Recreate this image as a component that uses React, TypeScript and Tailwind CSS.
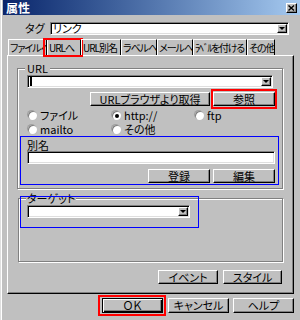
import type { ReactNode } from "react";

const raised =
  "bg-[#c0c0c0] border border-t-white border-l-white border-r-black border-b-black shadow-[inset_-1px_-1px_#808080]";
const sunken =
  "bg-white border border-t-[#808080] border-l-[#808080] border-r-white border-b-white shadow-[inset_1px_1px_#000,inset_-1px_-1px_#dfdfdf]";
const etched = "border border-[#808080] shadow-[inset_1px_1px_#fff,1px_1px_#fff]";
const mark = "pointer-events-none absolute border-2 border-[#ff0000]";

function Btn({ className, children }: { className: string; children: ReactNode }) {
  return (
    <div className={`flex items-center justify-center whitespace-nowrap ${raised} ${className}`}>
      {children}
    </div>
  );
}

function Combo({ className, children }: { className: string; children?: ReactNode }) {
  return (
    <div className={`flex h-[13px] items-stretch ${sunken} ${className}`}>
      <div className="flex flex-1 items-center pl-[2px] whitespace-nowrap">{children}</div>
      <div className={`my-[1px] mr-[1px] flex w-[10px] items-center justify-center ${raised}`}>
        <span className="h-0 w-0 border-x-[3px] border-t-[3px] border-x-transparent border-t-black" />
      </div>
    </div>
  );
}

function Radio({ checked, label, className }: { checked?: boolean; label: string; className: string }) {
  return (
    <div className={`flex items-center gap-[3px] ${className}`}>
      <span className="flex h-[9px] w-[9px] items-center justify-center rounded-full bg-white shadow-[inset_1px_1px_#808080,-1px_-1px_0_#a0a0a0]">
        {checked && <span className="h-[4px] w-[4px] rounded-full bg-black" />}
      </span>
      <span>{label}</span>
    </div>
  );
}

const tabs = [
  { label: "ファイルへ", w: "w-[39px]", t: "tracking-[-1px]" },
  { label: "URLへ", w: "w-[34px]", t: "tracking-[-1px]", marked: true },
  { label: "URL別名", w: "w-[40px]", t: "tracking-[-1px]" },
  { label: "ラベルへ", w: "w-[36px]", t: "tracking-[-1px]" },
  { label: "メールへ", w: "w-[36px]", t: "tracking-[-1px]" },
  { label: "ﾗﾍﾞﾙを付ける", w: "w-[54px]", t: "tracking-[-1.3px]" },
  { label: "その他", w: "w-[28px]", t: "tracking-[-1px]" },
];

export default function App() {
  return (
    <div className="h-[320px] w-[300px] overflow-hidden bg-[#c0c0c0] font-['Noto_Sans_CJK_JP',sans-serif] text-[11px] leading-none text-black shadow-[inset_1px_0_#dfdfdf,inset_2px_0_#fff] [font-feature-settings:'palt']">
      {/* title bar */}
      <div className="ml-[3px] flex h-[15px] items-center justify-between bg-linear-to-r from-[#0a246a] to-[#a6caf0] pl-[3px] pr-[3px]">
        <span className="text-[12px] font-bold text-white">属性</span>
        <div className={`flex h-[10px] w-[11px] items-center justify-center ${raised}`}>
          <svg width="7" height="6" viewBox="0 0 7 6">
            <path d="M0.5 0.5 L6 5.5 M6 0.5 L0.5 5.5" stroke="#000" strokeWidth="1.4" />
          </svg>
        </div>
      </div>

      {/* tag row */}
      <div className="mt-[7px] flex h-[13px] items-center">
        <span className="ml-[25px] w-[25px]">タグ</span>
        <Combo className="w-[239px]">リンク</Combo>
      </div>

      {/* tabs */}
      <div className="ml-[8px] mt-[4px] flex h-[16px]">
        {tabs.map((tab) => (
          <div
            key={tab.label}
            className={`relative h-full border-l border-r border-t border-l-white border-r-black border-t-white ${tab.w}`}
          >
            <div className={`h-full overflow-hidden whitespace-nowrap pl-[1px] pt-[3px] text-[10px] ${tab.t}`}>
              {tab.label}
            </div>
            {tab.marked && <span className={`${mark} -bottom-[2px] -left-[5px] -right-[3px] -top-[2px]`} />}
          </div>
        ))}
      </div>

      {/* tab panel */}
      <div className="ml-[7px] flex h-[239px] w-[287px] flex-col border border-b-black border-l-white border-r-black border-t-white shadow-[inset_-1px_-1px_#808080]">
        {/* URL group */}
        <div className={`relative ml-[9px] mt-[12px] h-[121px] w-[266px] ${etched}`}>
          <span className="absolute -top-[6px] left-[7px] bg-[#c0c0c0] px-[2px]">URL</span>
          <Combo className="ml-[9px] mt-[6px] w-[246px]">
            <span className="h-[9px] w-[2px] bg-black" />
          </Combo>
          <div className="ml-[72px] mt-[4px] flex gap-[3px]">
            <Btn className="h-[14px] w-[120px]">URLブラウザより取得</Btn>
            <div className="relative w-[62px]">
              <Btn className="h-[14px] w-full">参照</Btn>
              <span className={`${mark} -bottom-[3px] -left-[2px] -right-[2px] -top-[3px]`} />
            </div>
          </div>
          <div className="mt-[4px] flex h-[11px] items-center pl-[10px]">
            <Radio label="ファイル" className="w-[84px]" />
            <Radio label="http://" checked className="w-[83px]" />
            <Radio label="ftp" className="w-[40px]" />
          </div>
          <div className="mt-[3px] flex h-[11px] items-center pl-[10px]">
            <Radio label="mailto" className="w-[84px]" />
            <Radio label="その他" className="w-[83px]" />
          </div>
          <div className="ml-[2px] mt-[1px] flex h-[49px] w-[259px] flex-col border border-[#0000ff]">
            <span className="ml-[6px] mt-[3px] h-[11px]">別名</span>
            <div className={`ml-[6px] h-[13px] w-[248px] ${sunken}`} />
            <div className="ml-[127px] mt-[5px] flex gap-[3px]">
              <Btn className="h-[14px] w-[62px]">登録</Btn>
              <Btn className="h-[14px] w-[62px]">編集</Btn>
            </div>
          </div>
        </div>

        {/* target group */}
        <div className={`relative ml-[10px] mt-[9px] h-[64px] w-[265px] ${etched}`}>
          <span className="absolute -top-[6px] left-[7px] bg-[#c0c0c0] px-[1px]">ターゲット</span>
          <span className="pointer-events-none absolute -top-[3px] left-[1px] h-[32px] w-[179px] border border-[#0000ff]" />
          <Combo className="ml-[8px] mt-[6px] w-[163px]" />
        </div>

        <div className="ml-[150px] mt-[8px] flex gap-[5px]">
          <Btn className="h-[14px] w-[60px]">イベント</Btn>
          <Btn className="h-[14px] w-[59px]">スタイル</Btn>
        </div>
      </div>

      {/* dialog buttons */}
      <div className="ml-[102px] mt-[4px] flex">
        <div className="relative w-[61px]">
          <div className="flex h-[15px] w-full items-center justify-center border border-black bg-[#c0c0c0] shadow-[inset_1px_1px_#fff,inset_-1px_-1px_#000,inset_-2px_-2px_#808080]">
            ＯＫ
          </div>
          <span className={`${mark} -bottom-[3px] -left-[4px] -right-[3px] -top-[3px]`} />
        </div>
        <Btn className="ml-[5px] h-[15px] w-[61px]">キャンセル</Btn>
        <Btn className="ml-[4px] h-[15px] w-[61px]">ヘルプ</Btn>
      </div>
    </div>
  );
}
